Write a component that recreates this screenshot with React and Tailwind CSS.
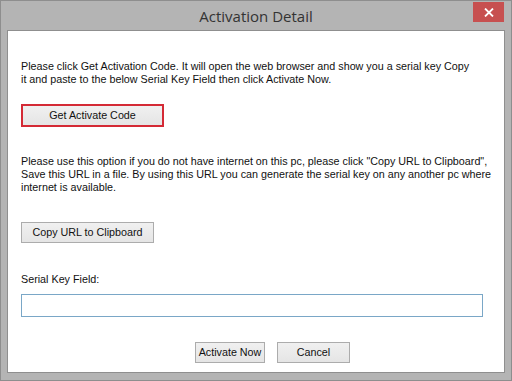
export default function App() {
  const body = { fontFamily: '"Liberation Sans", Arial, sans-serif' }
  const btn =
    'h-[21px] border border-[#acacac] bg-gradient-to-b from-[#f0f0f0] to-[#e5e5e5] text-[10.75px] text-[#111] leading-none'

  return (
    <div className="w-[512px] h-[381px] bg-[#b4b4b4] border border-[#8e8e8e] flex flex-col">
      <div className="h-[29px] relative flex items-center justify-center shrink-0">
        <span
          className="text-[15px] text-[#333] mt-[1px]"
          style={{ fontFamily: '"Open Sans", "Noto Sans", sans-serif' }}
        >
          Activation Detail
        </span>
        <button className="absolute right-[7px] top-[1px] w-[31px] h-[20px] bg-[#c75050] flex items-center justify-center">
          <svg width="10" height="9" viewBox="0 0 10 9">
            <path d="M1 0.5 L9 8.5 M9 0.5 L1 8.5" stroke="#fff" strokeWidth="1.8" />
          </svg>
        </button>
      </div>

      <div
        className="mx-[6px] h-[343px] bg-white border border-[#8f8f8f] pl-[13px] pr-[20px] pt-[29px] text-[10.75px] leading-[13px] text-[#111] flex flex-col"
        style={body}
      >
        <p className="whitespace-nowrap">
          Please click Get Activation Code. It will open the web browser and show you a serial key Copy
          <br />
          it and paste to the below Serial Key Field then click Activate Now.
        </p>

        <button className="mt-[18px] w-[143px] h-[23px] border-2 border-[#d42a35] bg-gradient-to-b from-[#f0f0f0] to-[#e5e5e5] text-[10.75px] text-[#111]">
          Get Activate Code
        </button>

        <p className="mt-[28px] whitespace-nowrap">
          Please use this option if you do not have internet on this pc, please click "Copy URL to Clipboard",
          <br />
          Save this URL in a file. By using this URL you can generate the serial key on any another pc where
          <br />
          internet is available.
        </p>

        <button className={`mt-[28px] w-[133px] ${btn}`}>Copy URL to Clipboard</button>

        <p className="mt-[30px]">Serial Key Field:</p>

        <input className="mt-[8px] w-[462px] h-[23px] border border-[#7aa7c7] outline-none px-1 text-[11px]" />

        <div className="mt-[25px] ml-[174px] flex gap-[12px]">
          <button className={`w-[70px] ${btn}`}>Activate Now</button>
          <button className={`w-[73px] ${btn}`}>Cancel</button>
        </div>
      </div>
    </div>
  )
}
